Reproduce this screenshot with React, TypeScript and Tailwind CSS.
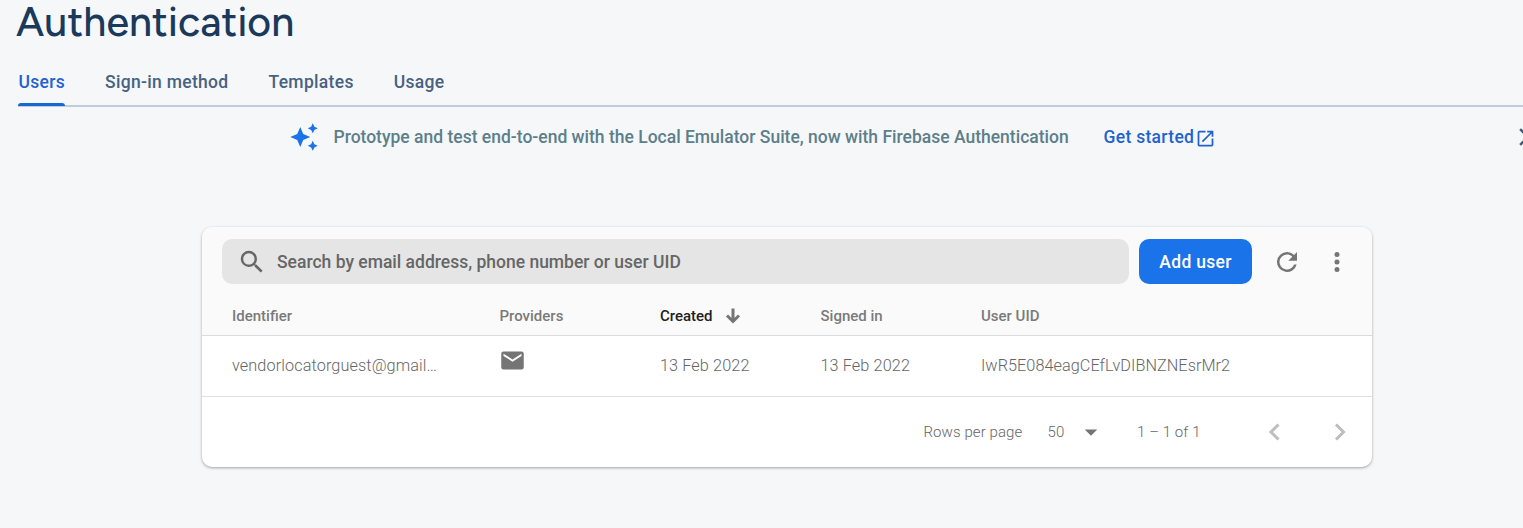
import React from "react";

const Icon = ({ d, className }: { d: string; className: string }) => (
  <svg viewBox="0 0 24 24" fill="currentColor" className={"shrink-0 " + className} aria-hidden="true">
    <path d={d} />
  </svg>
);

const cols = "grid grid-cols-[267.5px_160.5px_160.5px_160.5px_1fr] pl-[30px]";

export default function App() {
  return (
    <div className="h-[528px] w-full overflow-hidden bg-[#f6f7f9] font-['Roboto',sans-serif]">
      <header className="ml-[18px] h-[107px]">
        <h1 className="-ml-[2px] h-[46px] font-['Google_Sans','Figtree','Lato',sans-serif] text-[41px] font-[460] leading-[44px] tracking-[0.12px] text-[#1a3a5c]">Authentication</h1>
        <nav className="flex h-[61px] gap-10 border-b-2 border-[#bfcddb] text-[17.5px] font-medium tracking-[0.31px] text-[#476282]">
          <div className="flex h-[60px] w-[47px] flex-col justify-between text-[#1f62d0]">
            <span className="pl-[0.5px] pt-[22px] leading-7">Users</span>
            <span className="h-[3px] rounded-t-[3px] bg-[#1967d2]" />
          </div>
          <span className="pt-[22px] leading-7">Sign-in method</span>
          <span className="pt-[22px] leading-7">Templates</span>
          <span className="pt-[22px] leading-7">Usage</span>
        </nav>
      </header>
      <section className="flex h-[60px] items-center pl-[288.5px] text-[17.5px] font-medium text-[#5c7f8a]">
        <Icon className="mr-[15px] h-[30px] w-[30px] text-[#1a73e8]" d="M9 4 11.4 9.6 17 12 11.4 14.4 9 20 6.6 14.4 1 12 6.6 9.6ZM19 1 20.3 3.7 23 5 20.3 6.3 19 9 17.7 6.3 15 5 17.7 3.7ZM19 15 20.3 17.7 23 19 20.3 20.3 19 23 17.7 20.3 15 19 17.7 17.7Z" />
        <span className="w-[770px] whitespace-nowrap">Prototype and test end-to-end with the Local Emulator Suite, now with Firebase Authentication</span>
        <a className="flex items-center whitespace-nowrap tracking-[0.3px] text-[#1f62d0]"><span>Get started</span><Icon className="ml-px mt-[2px] h-[21px] w-[21px]" d="M19 19H5V5h7V3H5a2 2 0 0 0-2 2v14a2 2 0 0 0 2 2h14a2 2 0 0 0 2-2v-7h-2v7zM14 3v2h3.59l-9.83 9.83 1.41 1.41L19 6.41V10h2V3h-7z" /></a>
        <Icon className="ml-auto -mr-[19.5px] h-[30px] w-[30px] text-[#455a75]" d="M19 6.41 17.59 5 12 10.59 6.41 5 5 6.41 10.59 12 5 17.59 6.41 19 12 13.41 17.59 19 19 17.59 13.41 12z" />
      </section>
      <main className="ml-[202px] mt-[60px] h-[240px] w-[1170px] overflow-hidden rounded-[10px] bg-white shadow-[0_1px_3px_rgba(0,0,0,.35)]">
        <div className="h-[109px] border-b border-[#dadada] bg-[#fafafa]">
          <div className="flex h-[69px] items-center pl-5">
            <div className="flex h-[45px] w-[907px] items-center rounded-[10px] bg-[#e5e5e5] pl-[15px] text-[17.5px] font-medium text-[#666]">
              <Icon className="mr-[10px] h-[30px] w-[30px] text-[#666]" d="M15.5 14h-.79l-.28-.27A6.47 6.47 0 0 0 16 9.5 6.5 6.5 0 1 0 9.5 16c1.61 0 3.09-.59 4.23-1.57l.27.28v.79l5 4.99L20.49 19l-4.99-5zm-6 0C7.01 14 5 11.99 5 9.5S7.01 5 9.5 5 14 7.01 14 9.5 11.99 14 9.5 14z" />
              <span className="pt-px">Search by email address, phone number or user UID</span>
            </div>
            <button className="ml-[10px] h-[45px] w-[113px] rounded-[10px] bg-[#1a73e8] pt-px text-[17.5px] font-medium tracking-[0.3px] text-white">Add user</button>
            <Icon className="ml-5 h-[30px] w-[30px] text-[#757575]" d="M17.65 6.35A7.96 7.96 0 0 0 12 4a8 8 0 1 0 7.73 10h-2.08A6 6 0 1 1 12 6c1.66 0 3.14.69 4.22 1.78L13 11h7V4l-2.35 2.35z" />
            <Icon className="ml-5 h-[30px] w-[30px] text-[#757575]" d="M12 8a2 2 0 1 0 0-4 2 2 0 0 0 0 4zm0 2a2 2 0 1 0 0 4 2 2 0 0 0 0-4zm0 6a2 2 0 1 0 0 4 2 2 0 0 0 0-4z" />
          </div>
          <div className={cols + " h-[40px] items-center text-[15px] font-medium text-[#7a7a7a]"}>
            <span>Identifier</span><span>Providers</span>
            <span className="flex items-center text-[#212121]">Created
              <svg viewBox="0 0 16 18" className="ml-3 h-[18px] w-4" fill="none" stroke="#757575" strokeWidth="3" aria-hidden="true"><path d="M8 1.5v13M2 8.5l6 6 6-6" /></svg>
            </span>
            <span>Signed in</span><span>User UID</span>
          </div>
        </div>
        <div className={cols + " h-[61px] items-center border-b border-[#e0e0e0] text-[16.25px] font-light tracking-[0.1px] text-[#666]"}>
          <span>vendorlocatorguest@gmail…</span>
          <Icon className="mb-[12px] -ml-px h-[27px] w-[27px] text-[#757575]" d="M20 4H4a2 2 0 0 0-2 2v12a2 2 0 0 0 2 2h16a2 2 0 0 0 2-2V6a2 2 0 0 0-2-2zm0 4-8 5-8-5V6l8 5 8-5v2z" />
          <span>13 Feb 2022</span><span>13 Feb 2022</span><span className="tracking-[0.04px]">IwR5E084eagCEfLvDIBNZNEsrMr2</span>
        </div>
        <footer className="flex h-[70px] items-center pl-[721.5px] text-[15px] font-light tracking-[0.08px] text-[#666]">
          <span className="w-[124px]">Rows per page</span><span className="w-[28px]">50</span>
          <Icon className="h-[30px] w-[30px] text-[#757575]" d="m7 10 5 5 5-5z" />
          <span className="ml-[31.5px] w-[121.5px]">1 – 1 of 1</span>
          <svg viewBox="0 0 30 30" className="h-[30px] w-[30px]" fill="none" stroke="#bdbdbd" strokeWidth="3" aria-hidden="true"><path d="m19.5 7.5-7.5 7.5 7.5 7.5" /></svg>
          <svg viewBox="0 0 30 30" className="ml-[35px] h-[30px] w-[30px]" fill="none" stroke="#bdbdbd" strokeWidth="3" aria-hidden="true"><path d="m12 7.5 7.5 7.5-7.5 7.5" /></svg>
        </footer>
      </main>
    </div>
  );
}
